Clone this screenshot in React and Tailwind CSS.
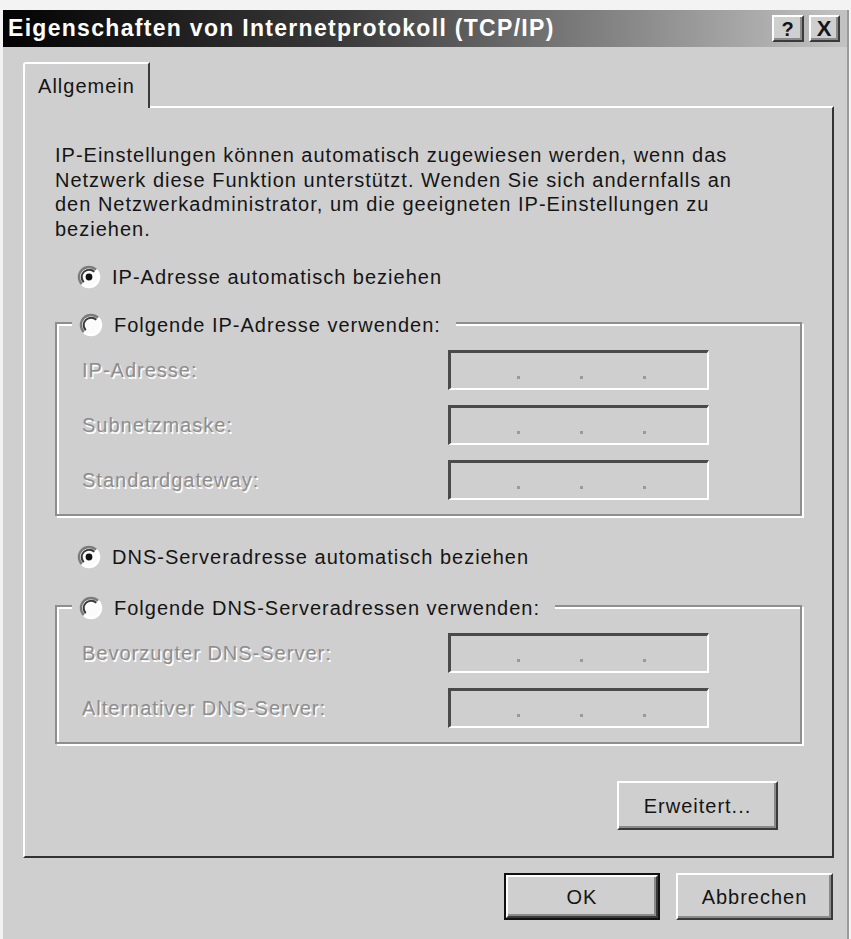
import React from 'react';

const Radio = ({ checked }) => (
  <svg width="24" height="24" viewBox="0 0 24 24" className="shrink-0">
    <circle cx="12" cy="12" r="10" fill="#fbfbfb" />
    <path d="M4.9 19.1 A10 10 0 0 1 19.1 4.9" fill="none" stroke="#7c7c7c" strokeWidth="2.4" />
    <path d="M19.1 4.9 A10 10 0 0 1 4.9 19.1" fill="none" stroke="#ffffff" strokeWidth="2.4" />
    <path d="M6.7 17.3 A7.5 7.5 0 0 1 17.3 6.7" fill="none" stroke="#3a3a3a" strokeWidth="2" />
    {checked && <circle cx="12" cy="12" r="3.4" fill="#111" />}
  </svg>
);

const IpField = () => (
  <div className="w-[261px] h-[40px] border-t-[3px] border-l-[3px] border-t-[#4a4a4a] border-l-[#4a4a4a] border-b-2 border-r-2 border-b-white border-r-white flex items-end pb-[9px] pl-[66px] gap-[60px]">
    <span className="w-[3px] h-[3px] bg-[#9a9a9a]" />
    <span className="w-[3px] h-[3px] bg-[#9a9a9a]" />
    <span className="w-[3px] h-[3px] bg-[#9a9a9a]" />
  </div>
);

const FieldRow = ({ label }) => (
  <div className="flex items-center h-[40px]">
    <span className="w-[366px] text-[20px] tracking-[1px] text-[#8e8e8e] [text-shadow:1.5px_1.5px_0_#fff]">{label}</span>
    <IpField />
  </div>
);

const GroupBox = ({ legend, fields }) => (
  <div className="relative border-2 border-[#8e8e8e] shadow-[inset_2px_2px_0_#fff,2px_2px_0_#fff] pl-[25px] pt-[26px] pb-[14px] flex flex-col gap-[15px]">
    <div className="absolute left-[15px] top-[-13px] h-[28px] flex items-center gap-[11px] bg-[#cfcfcf] pl-[7px] pr-[15px]">
      <Radio checked={false} />
      <span className="text-[20px] tracking-[1px] text-[#151515]">{legend}</span>
    </div>
    {fields.map((f) => (
      <FieldRow key={f} label={f} />
    ))}
  </div>
);

const RaisedButton = ({ children, className }) => (
  <div className={`flex items-center justify-center bg-[#cfcfcf] border-t-2 border-l-2 border-t-white border-l-white border-b-2 border-r-2 border-b-[#3a3a3a] border-r-[#3a3a3a] shadow-[inset_-2px_-2px_0_#8a8a8a] text-[20px] tracking-[1px] text-[#151515] ${className}`}>
    {children}
  </div>
);

export default function App() {
  return (
    <div className="w-[851px] h-[939px] bg-[#f3f3f3] pt-[10px] pl-[3px] pr-[2px] font-['Liberation_Sans',Arial,sans-serif]">
      <div className="h-full bg-[#cfcfcf] flex flex-col border-r-2 border-[#9a9a9a]">
        {/* title bar */}
        <div className="h-[37px] flex items-center justify-between pl-[5px] pr-[7px] bg-[linear-gradient(to_right,#030303,#3a3a3a_40%,#c3c3c3)]">
          <span className="text-white font-bold text-[23px] tracking-[1.3px]">Eigenschaften von Internetprotokoll (TCP/IP)</span>
          <div className="flex gap-[5px]">
            <RaisedButton className="w-[32px] h-[27px] font-bold !text-[20px]">?</RaisedButton>
            <RaisedButton className="w-[31px] h-[27px] font-bold !text-[22px]">X</RaisedButton>
          </div>
        </div>

        <div className="flex flex-col pl-[20px] pr-[13px]">
          {/* tabs */}
          <div className="flex mt-[15px]">
            <div className="relative z-10 -mb-[2px] w-[127px] h-[46px] bg-[#cfcfcf] border-l-2 border-t-2 border-white border-r-2 border-r-[#3a3a3a] rounded-tl-[3px] flex items-center justify-center text-[20px] tracking-[1px] text-[#151515]">
              Allgemein
            </div>
          </div>

          {/* panel */}
          <div className="h-[752px] border-l-2 border-t-2 border-white border-r-2 border-b-2 border-r-[#333] border-b-[#333] pl-[30px] pr-[30px] pt-[35px] flex flex-col">
            <p className="text-[20px] tracking-[1px] leading-[24.5px] text-[#151515]">
              IP-Einstellungen können automatisch zugewiesen werden, wenn das<br />
              Netzwerk diese Funktion unterstützt. Wenden Sie sich andernfalls an<br />
              den Netzwerkadministrator, um die geeigneten IP-Einstellungen zu<br />
              beziehen.
            </p>

            <div className="mt-[22px] h-[28px] flex items-center gap-[11px] ml-[22px]">
              <Radio checked />
              <span className="text-[20px] tracking-[1px] text-[#151515]">IP-Adresse automatisch beziehen</span>
            </div>

            <div className="mt-[31px]">
              <GroupBox
                legend="Folgende IP-Adresse verwenden:"
                fields={['IP-Adresse:', 'Subnetzmaske:', 'Standardgateway:']}
              />
            </div>

            <div className="mt-[27px] h-[28px] flex items-center gap-[11px] ml-[22px]">
              <Radio checked />
              <span className="text-[20px] tracking-[1px] text-[#151515]">DNS-Serveradresse automatisch beziehen</span>
            </div>

            <div className="mt-[34px]">
              <GroupBox
                legend="Folgende DNS-Serveradressen verwenden:"
                fields={['Bevorzugter DNS-Server:', 'Alternativer DNS-Server:']}
              />
            </div>

            <div className="mt-[37px] flex justify-end pr-[24px]">
              <RaisedButton className="w-[161px] h-[49px]">Erweitert...</RaisedButton>
            </div>
          </div>

          {/* footer */}
          <div className="mt-[15px] flex justify-end gap-[16px] pr-[1px]">
            <div className="border-2 border-[#111]">
              <RaisedButton className="w-[152px] h-[43px]">OK</RaisedButton>
            </div>
            <RaisedButton className="w-[157px] h-[47px]">Abbrechen</RaisedButton>
          </div>
        </div>
      </div>
    </div>
  );
}
